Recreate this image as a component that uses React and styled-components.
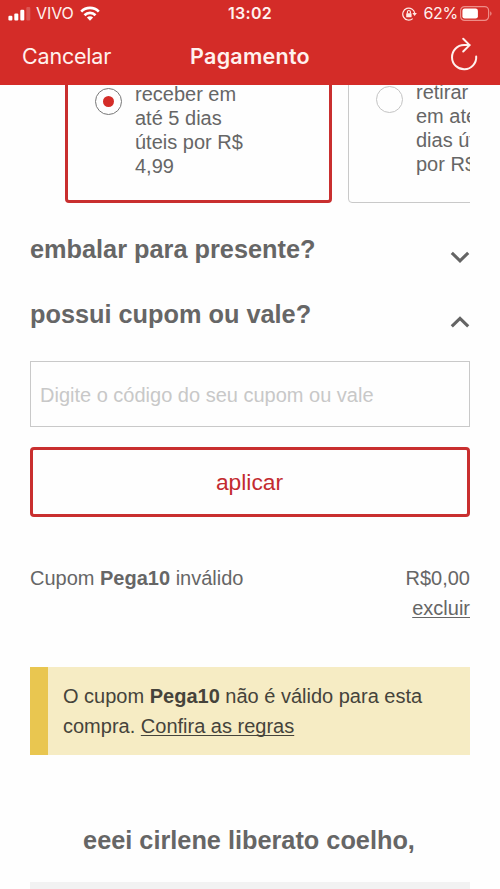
import React from 'react';
import styled, { createGlobalStyle } from 'styled-components';

const colors = {
  red: '#d42c28',
  border: '#c92f2f',
  text: '#666',
  line: '#c9c9c9',
};

const GlobalStyle = createGlobalStyle`
  * {
    box-sizing: border-box;
  }

  body {
    margin: 0;
    background: #fefefe;
    color: ${colors.text};
    font-family: 'Liberation Sans', Arial, sans-serif;
    font-size: 20px;
  }
`;

const Screen = styled.div`
  width: 500px;
  height: 889px;
  overflow: hidden;
`;

const Header = styled.header`
  height: 85px;
  background: ${colors.red};
  color: #fff1ee;
  font-family: Inter, sans-serif;
`;

const StatusBar = styled.div`
  height: 27px;
  padding: 0 8px;
  display: grid;
  grid-template-columns: 1fr auto 1fr;
  align-items: center;
  font-size: 16px;
  line-height: 27px;
`;

const StatusGroup = styled.div`
  display: flex;
  align-items: center;
  justify-content: ${({ $end }) => ($end ? 'flex-end' : 'flex-start')};
`;

const Carrier = styled.span`
  margin: 0 6px 0 5px;
  letter-spacing: -0.1px;
`;

const Clock = styled.span`
  font-weight: 600;
  letter-spacing: 0.3px;
`;

const Percent = styled.span`
  margin: 0 2px 0 7px;
  letter-spacing: -0.3px;
`;

const NavBar = styled.nav`
  height: 57px;
  padding: 0 22px;
  display: grid;
  grid-template-columns: 1fr auto 1fr;
  align-items: center;
  font-size: 21.5px;
`;

const Cancel = styled.span`
  letter-spacing: -0.2px;
`;

const NavTitle = styled.span`
  font-weight: 600;
  letter-spacing: 0.25px;
`;

const Reload = styled.div`
  display: flex;
  justify-content: flex-end;
  padding-bottom: 3px;
`;

const Main = styled.main`
  padding: 0 30px;
`;

const Options = styled.div`
  height: 118px;
  padding-left: 35px;
  display: flex;
  align-items: flex-end;
  gap: 16px;
  overflow: hidden;
`;

const Option = styled.div`
  flex: 0 0 267px;
  height: 150px;
  display: flex;
  align-items: flex-end;
  gap: 13px;
  padding: 0 0 ${({ $selected }) => ($selected ? '22px 27px' : '26px 27px')};
  border: ${({ $selected }) =>
    $selected ? `2.500px solid ${colors.border}` : `1.5px solid ${colors.line}`};
  border-width: ${({ $selected }) => ($selected ? '3px' : '1px')};
  border-radius: 4px;
`;

const Radio = styled.div`
  width: 27px;
  height: 27px;
  margin-bottom: 63.5px;
  display: flex;
  align-items: center;
  justify-content: center;
  border: 1.5px solid ${({ $selected }) => ($selected ? '#777' : '#c4c4c4')};
  border-radius: 50%;
`;

const Dot = styled.div`
  width: 11px;
  height: 11px;
  border-radius: 50%;
  background: ${colors.red};
`;

const OptionText = styled.div`
  width: 125px;
  line-height: 24px;
`;

const Section = styled.div`
  height: 30px;
  margin-top: ${({ $top }) => $top}px;
  display: flex;
  justify-content: space-between;
`;

const Heading = styled.h2`
  margin: 0;
  font-size: 25.3px;
  line-height: 30px;
`;

const Chevron = styled.svg`
  width: 20px;
  height: 12px;
  margin-top: 17px;
  fill: none;
  stroke: #646464;
  stroke-width: 3.1;
`;

const Input = styled.input`
  display: block;
  width: 100%;
  height: 66px;
  margin-top: 32px;
  padding: 2px 9px 0;
  border: 1px solid ${colors.line};
  border-radius: 0;
  background: #fefefe;
  font: inherit;
  outline: none;

  &::placeholder {
    color: #c8c8c8;
    opacity: 1;
  }
`;

const Button = styled.button`
  display: block;
  width: 100%;
  height: 70px;
  margin-top: 20px;
  padding: 1px 1px 0 0;
  border: 3px solid ${colors.border};
  border-radius: 4px;
  background: #fefefe;
  color: #c32b2f;
  font-family: inherit;
  font-size: 22.8px;
`;

const Coupon = styled.div`
  margin-top: 46px;
  display: flex;
  justify-content: space-between;
  line-height: 30px;
`;

const Amount = styled.div`
  text-align: right;
`;

const Link = styled.a`
  text-decoration: underline;
  text-decoration-thickness: 1.3px;
  text-underline-offset: 2px;
  text-decoration-skip-ink: none;
`;

const Alert = styled.div`
  height: 88px;
  margin-top: 44px;
  padding: 15px 15px 0;
  border-left: 18px solid #e9c650;
  background: #f6ecc4;
  color: #45433b;
  line-height: 29.5px;
`;

const Greeting = styled(Heading)`
  margin-top: 70px;
  padding-right: 2px;
  text-align: center;
`;

const Panel = styled.div`
  height: 30px;
  margin-top: 27px;
  background: #f2f2f2;
`;

const SignalIcon = () => (
  <svg width="23" height="14" viewBox="0 0 23 14" fill="#fff">
    <rect x="0.4" y="8.8" width="4" height="4.7" rx="1.1" />
    <rect x="6.3" y="6.4" width="4" height="7.1" rx="1.1" />
    <rect x="12.3" y="2.8" width="4" height="10.7" rx="1.1" />
    <rect x="18.3" y="0" width="4" height="13.5" rx="1.1" opacity="0.2" />
  </svg>
);

const WifiIcon = () => (
  <svg width="20" height="15" viewBox="0 0 20 15" fill="none" stroke="#fff" strokeWidth="2.7">
    <path d="M1.2 5.6a12.4 12.4 0 0 1 17.6 0" />
    <path d="M4.5 9.2a7.8 7.8 0 0 1 11 0" />
    <path d="M10 14.7 6.9 11.6a4.4 4.4 0 0 1 6.2 0z" fill="#fff" stroke="none" />
  </svg>
);

const LockIcon = () => (
  <svg width="15" height="14" viewBox="0 0 15 14" fill="none" stroke="#ffe9e5" strokeWidth="1.2">
    <path d="M10.7 11.6A6 6 0 1 1 12.7 6.2" />
    <path d="M10.3 6.1h4.6l-2.3 3z" fill="#ffe9e5" stroke="none" />
    <rect x="4.2" y="6.2" width="5.4" height="4.1" rx="0.6" fill="#ffe9e5" stroke="none" />
    <path d="M5.4 6.4V5a1.5 1.5 0 0 1 3 0v1.4" />
  </svg>
);

const BatteryIcon = () => (
  <svg width="32" height="15" viewBox="0 0 32 15">
    <rect x="0.6" y="0.6" width="28" height="13.8" rx="4" fill="none" stroke="#ee8d88" strokeWidth="1.2" />
    <rect x="2.4" y="2.4" width="15.5" height="10.2" rx="2.3" fill="#fff" />
    <path d="M30.2 5.2v4.6c1.8-.8 1.8-3.8 0-4.6z" fill="#ee8d88" />
  </svg>
);

const ReloadIcon = () => (
  <svg
    width="28"
    height="34"
    viewBox="0 0 28 34"
    fill="none"
    stroke="#fff1ee"
    strokeWidth="2"
    strokeLinecap="round"
    strokeLinejoin="round"
  >
    <path d="M26.2 19.5A12.1 12.1 0 1 1 14 8.1h5.5" />
    <path d="M13.2 1.7l6.4 6.4-6.4 6.4" />
  </svg>
);

const App = () => (
  <Screen>
    <GlobalStyle />
    <Header>
      <StatusBar>
        <StatusGroup>
          <SignalIcon />
          <Carrier>VIVO</Carrier>
          <WifiIcon />
        </StatusGroup>
        <Clock>13:02</Clock>
        <StatusGroup $end>
          <LockIcon />
          <Percent>62%</Percent>
          <BatteryIcon />
        </StatusGroup>
      </StatusBar>
      <NavBar>
        <Cancel>Cancelar</Cancel>
        <NavTitle>Pagamento</NavTitle>
        <Reload>
          <ReloadIcon />
        </Reload>
      </NavBar>
    </Header>
    <Main>
      <Options>
        <Option $selected>
          <Radio $selected>
            <Dot />
          </Radio>
          <OptionText>receber em até 5 dias úteis por R$ 4,99</OptionText>
        </Option>
        <Option>
          <Radio />
          <OptionText>
            retirar
            <br />
            em até
            <br />
            dias úteis
            <br />
            por R$
          </OptionText>
        </Option>
      </Options>
      <Section $top={31}>
        <Heading>embalar para presente?</Heading>
        <Chevron viewBox="0 0 20 12">
          <path d="M1.8 1.8 10 9.8l8.2-8" />
        </Chevron>
      </Section>
      <Section $top={35}>
        <Heading>possui cupom ou vale?</Heading>
        <Chevron viewBox="0 0 20 12">
          <path d="M1.8 10.4 10 2.4l8.2 8" />
        </Chevron>
      </Section>
      <Input placeholder="Digite o código do seu cupom ou vale" />
      <Button>aplicar</Button>
      <Coupon>
        <div>
          Cupom <b>Pega10</b> inválido
        </div>
        <Amount>
          R$0,00
          <br />
          <Link>excluir</Link>
        </Amount>
      </Coupon>
      <Alert>
        O cupom <b>Pega10</b> não é válido para esta compra. <Link>Confira as regras</Link>
      </Alert>
      <Greeting>eeei cirlene liberato coelho,</Greeting>
      <Panel />
    </Main>
  </Screen>
);

export default App;
